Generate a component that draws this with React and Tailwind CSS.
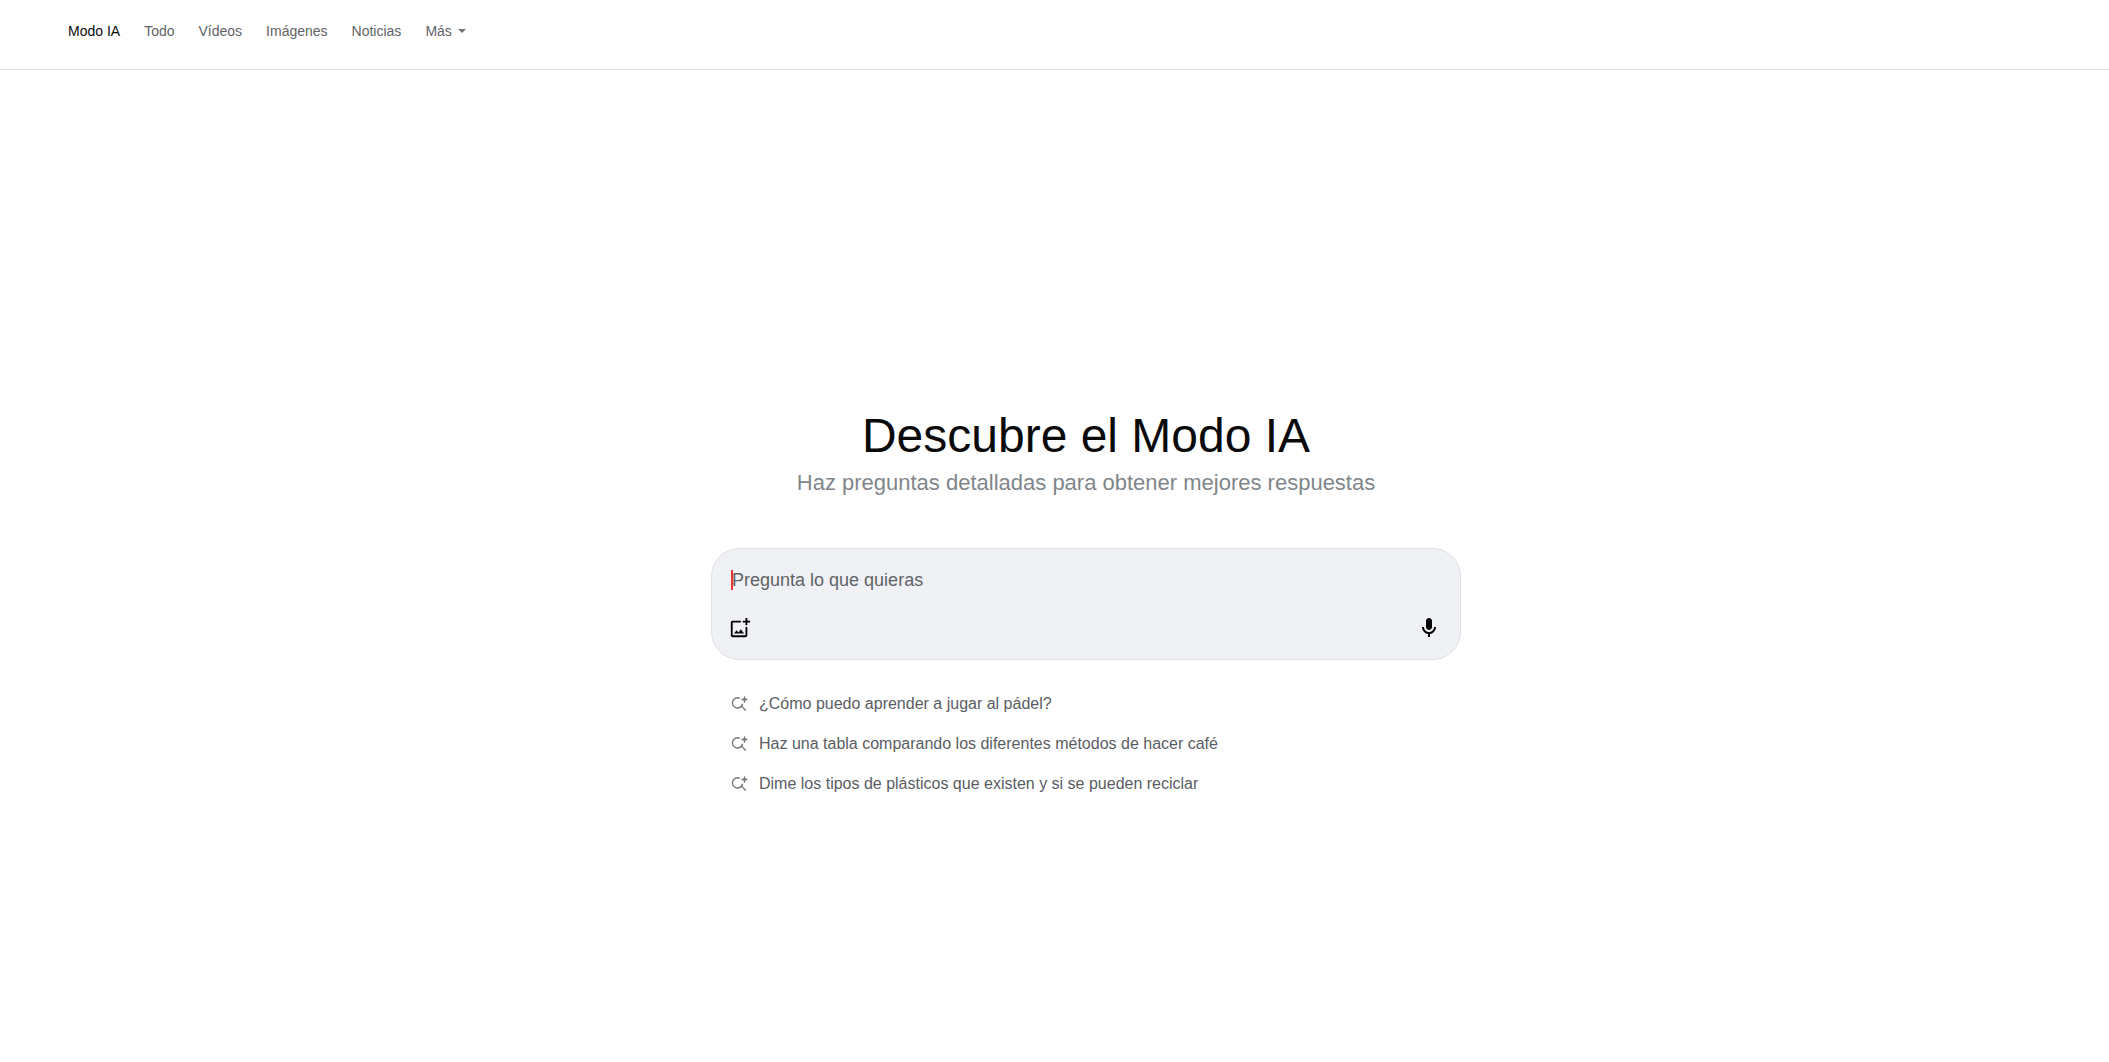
const navItems = ['Todo', 'Vídeos', 'Imágenes', 'Noticias']

const suggestions = [
  '¿Cómo puedo aprender a jugar al pádel?',
  'Haz una tabla comparando los diferentes métodos de hacer café',
  'Dime los tipos de plásticos que existen y si se pueden reciclar',
]

function AddImageIcon() {
  return (
    <svg width="22" height="22" viewBox="0 0 24 24" fill="#000" className="-ml-[2px] shrink-0">
      <path d="M18 20H4V6h9V4H4c-1.1 0-2 .9-2 2v14c0 1.1.9 2 2 2h14c1.1 0 2-.9 2-2v-9h-2v9zm-7.79-3.17l-1.96-2.36L5.5 18h11l-3.54-4.71zM20 4V1h-2v3h-3c.01.01 0 2 0 2h3v2.99c.01.01 2 0 2 0V6h3V4h-3z" />
    </svg>
  )
}

function MicIcon() {
  return (
    <svg width="24" height="24" viewBox="0 0 24 24" fill="#000" className="shrink-0">
      <path d="M12 14c1.66 0 3-1.34 3-3V5c0-1.66-1.34-3-3-3S9 3.34 9 5v6c0 1.66 1.34 3 3 3z" />
      <path d="M17 11c0 2.76-2.24 5-5 5s-5-2.24-5-5H5c0 3.53 2.61 6.43 6 6.92V21h2v-3.08c3.39-.49 6-3.39 6-6.92h-2z" />
    </svg>
  )
}

function SearchSparkIcon() {
  return (
    <svg width="18" height="18" viewBox="0 0 18 18" fill="none" className="shrink-0">
      <path d="M8.8 3.3A5.1 5.1 0 1 0 11.6 8.6" stroke="#70757a" strokeWidth="1.4" />
      <path d="M10.2 10.6l4.6 5" stroke="#70757a" strokeWidth="1.4" />
      <path d="M13.5 0.6l1 2.9 2.9 1-2.9 1-1 2.9-1-2.9-2.9-1 2.9-1z" fill="#70757a" />
    </svg>
  )
}

export default function App() {
  return (
    <div className="min-h-[1062px] bg-white font-['Liberation_Sans',Arial,sans-serif]">
      <header className="flex h-[70px] items-start gap-6 border-b border-[#e0e0e6] pl-[68px] pt-[22px] text-sm leading-[18px]">
        <span className="text-[#0a0a0a]">Modo IA</span>
        {navItems.map((label) => (
          <span key={label} className="text-[#5f6368]">
            {label}
          </span>
        ))}
        <span className="flex items-center gap-[6px] text-[#5f6368]">
          Más
          <span className="h-0 w-0 border-x-[4px] border-t-[4px] border-x-transparent border-t-[#70757a]" />
        </span>
      </header>

      <main className="flex flex-col items-center pl-[63px] pt-[336px]">
        <h1 className="text-[48px] leading-[60px] text-[#0a0a0a]">Descubre el Modo IA</h1>
        <p className="mt-[2px] text-[22px] leading-[30px] text-[#80868b]">
          Haz preguntas detalladas para obtener mejores respuestas
        </p>

        <div className="mt-[50px] flex h-[112px] w-[750px] flex-col justify-between rounded-[28px] border border-[#dfe0e8] bg-[#f0f1f5] pb-[19px] pl-[19px] pr-[19px] pt-[20px]">
          <div className="flex items-center">
            <span className="-mr-[1px] h-[20px] w-[2px] bg-[#e53935]" />
            <span className="text-[18px] leading-[22px] text-[#5f6368]">Pregunta lo que quieras</span>
          </div>
          <div className="flex items-center justify-between">
            <AddImageIcon />
            <MicIcon />
          </div>
        </div>

        <ul className="mt-[30px] flex w-[750px] flex-col gap-[12px] pl-[20px]">
          {suggestions.map((text) => (
            <li key={text} className="flex h-[28px] items-center gap-[10px] text-base text-[#5a5d62]">
              <SearchSparkIcon />
              {text}
            </li>
          ))}
        </ul>
      </main>
    </div>
  )
}
